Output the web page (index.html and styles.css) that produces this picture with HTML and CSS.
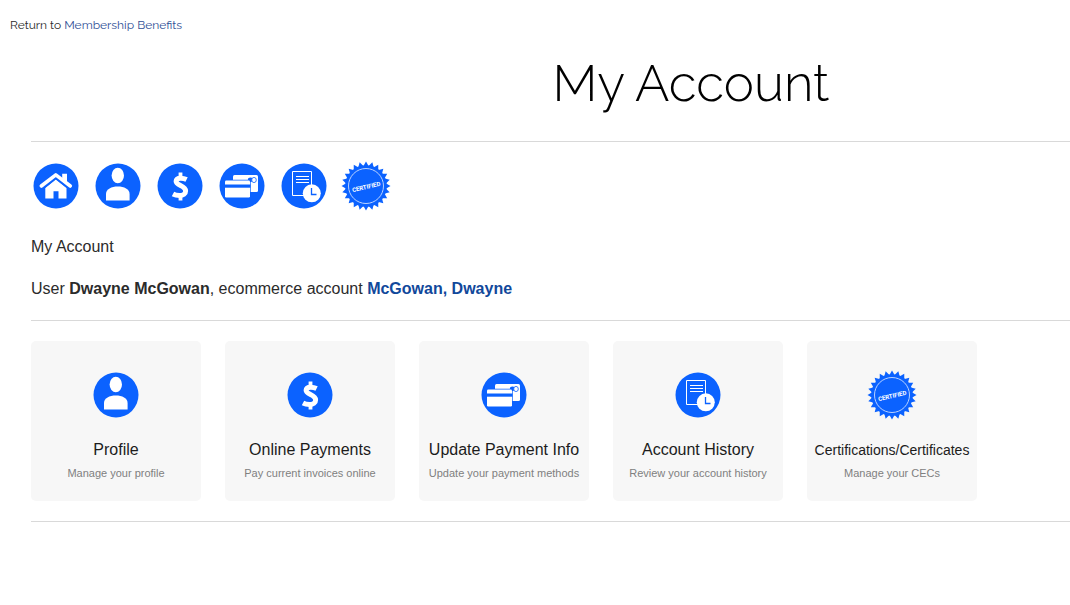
FILE: index.html
```html
<!DOCTYPE html>
<html lang="en">
<head>
<meta charset="utf-8">
<title>My Account</title>
<link rel="stylesheet" href="styles.css">
</head>
<body>
<svg class="sprite" aria-hidden="true">
  <symbol id="home" viewBox="0 0 50 50">
    <circle cx="25" cy="25" r="22.500" fill="#0b62ff"/>
    <path d="M10.300 25 24.800 13.800 39.300 25" fill="none" stroke="#fff" stroke-width="3.600" stroke-linecap="round" stroke-linejoin="round"/>
    <path d="M31.200 12.700h4.800v10l-4.800-3.500zM14.300 27l10.500-8.400 10.700 8.400v10.500h-8v-7.200h-5v7.200h-8.200z" fill="#fff"/>
    <path d="M13 27.300 24.800 18l11.900 9.300" fill="none" stroke="#0b62ff" stroke-width=".7"/>
  </symbol>
  <symbol id="user" viewBox="0 0 50 50">
    <circle cx="25" cy="25" r="22.500" fill="#0b62ff"/>
    <ellipse cx="24.800" cy="14.500" rx="6.200" ry="7.700" fill="#fff"/>
    <path d="M13 39.500v-6.500c0-5 5.500-7.500 11.800-7.500s11.800 2.500 11.800 7.500v6.500z" fill="#fff"/>
  </symbol>
  <symbol id="dollar" viewBox="0 0 50 50">
    <circle cx="25" cy="25" r="22.500" fill="#0b62ff"/>
    <path d="M31.600 18.600c-1.800-.9-3.800-1.400-5.800-1.400-3 0-4.700 1.200-4.700 3.100 0 4.600 9.500 3.900 9.500 9.600 0 3-2.400 4.600-6 4.600-2.400 0-4.600-.4-6.600-1.500" fill="none" stroke="#fff" stroke-width="5"/>
    <path d="M23.600 11.500h3.800v5h-3.800zM23.600 34.500h3.800v5h-3.800z" fill="#fff"/>
  </symbol>
  <symbol id="cards" viewBox="0 0 50 50">
    <circle cx="25" cy="25" r="22.500" fill="#0b62ff"/>
    <rect x="16" y="14" width="25" height="17" rx="1.500" fill="#fff"/>
    <ellipse cx="33.500" cy="18.700" rx="2.600" ry="2.300" fill="#0b62ff"/>
    <ellipse cx="37" cy="19" rx="2.300" ry="2.600" fill="#fff" stroke="#0b62ff" stroke-width=".8"/>
    <rect x="7.200" y="18.700" width="26.500" height="18.600" rx="1.800" fill="#0b62ff"/>
    <rect x="8" y="19.500" width="25" height="17" rx="1.200" fill="#fff"/>
    <path d="M7.500 23.500h26v3.200h-26z" fill="#0b62ff"/>
  </symbol>
  <symbol id="history" viewBox="0 0 50 50">
    <circle cx="25" cy="25" r="22.500" fill="#0b62ff"/>
    <path d="M13.500 10.500h19v24h-19zM17 15.500h13M17 18.500h13M17 21.500h13" fill="none" stroke="#fff"/>
    <circle cx="32.800" cy="32.300" r="9" fill="#fff"/>
    <path d="M32.500 27v6.500h5" fill="none" stroke="#0b62ff" stroke-width="1.300"/>
  </symbol>
  <symbol id="seal" viewBox="0 0 50 50">
    <g fill="#0b62ff">
      <path d="M25 .5 46.200 37.250H3.800z"/>
      <path d="M25 .5 46.200 37.250H3.800z" transform="rotate(15 25 25)"/>
      <path d="M25 .5 46.200 37.250H3.800z" transform="rotate(30 25 25)"/>
      <path d="M25 .5 46.200 37.250H3.800z" transform="rotate(45 25 25)"/>
      <path d="M25 .5 46.200 37.250H3.800z" transform="rotate(60 25 25)"/>
      <path d="M25 .5 46.200 37.250H3.800z" transform="rotate(75 25 25)"/>
      <path d="M25 .5 46.200 37.250H3.800z" transform="rotate(90 25 25)"/>
      <path d="M25 .5 46.200 37.250H3.800z" transform="rotate(105 25 25)"/>
    </g>
    <circle cx="25" cy="25" r="20.800" fill="#0b62ff"/>
    <circle cx="25" cy="25" r="17.500" fill="none" stroke="#b9d2ff"/>
  </symbol>
</svg>

<nav class="breadcrumb">Return to <a href="#benefits">Membership Benefits</a></nav>

<main class="account">
  <h1 class="page-title">My Account</h1>
  <hr class="rule">
  <nav class="shortcuts" aria-label="Account shortcuts">
    <a href="#home" aria-label="Home"><svg class="icon"><use href="#home"/></svg></a>
    <a href="#profile" aria-label="Profile"><svg class="icon"><use href="#user"/></svg></a>
    <a href="#payments" aria-label="Online Payments"><svg class="icon"><use href="#dollar"/></svg></a>
    <a href="#methods" aria-label="Update Payment Info"><svg class="icon"><use href="#cards"/></svg></a>
    <a href="#account-history" aria-label="Account History"><svg class="icon"><use href="#history"/></svg></a>
    <a href="#certificates" aria-label="Certifications"><svg class="icon" viewBox="0 0 50 50"><use href="#seal"/><text class="seal-text" x="25" y="28" text-anchor="middle" transform="rotate(-13 25 25)">CERTIFIED</text></svg></a>
  </nav>
  <p class="line">My Account</p>
  <p class="line">User <strong>Dwayne McGowan</strong>, ecommerce account <a class="owner" href="#owner">McGowan, Dwayne</a></p>
  <hr class="rule">
  <div class="tiles">
    <a class="tile" href="#profile"><svg class="icon" aria-hidden="true"><use href="#user"/></svg><span class="tile-title">Profile</span><span class="tile-note">Manage your profile</span></a>
    <a class="tile" href="#payments"><svg class="icon" aria-hidden="true"><use href="#dollar"/></svg><span class="tile-title">Online Payments</span><span class="tile-note">Pay current invoices online</span></a>
    <a class="tile" href="#methods"><svg class="icon" aria-hidden="true"><use href="#cards"/></svg><span class="tile-title">Update Payment Info</span><span class="tile-note">Update your payment methods</span></a>
    <a class="tile" href="#account-history"><svg class="icon" aria-hidden="true"><use href="#history"/></svg><span class="tile-title">Account History</span><span class="tile-note">Review your account history</span></a>
    <a class="tile" href="#certificates"><svg class="icon" viewBox="0 0 50 50" aria-hidden="true"><use href="#seal"/><text class="seal-text" x="25" y="28" text-anchor="middle" transform="rotate(-13 25 25)">CERTIFIED</text></svg><span class="tile-title tile-title-small">Certifications/Certificates</span><span class="tile-note">Manage your CECs</span></a>
  </div>
  <hr class="rule">
</main>
</body>
</html>
```
FILE: styles.css
```css
* { box-sizing: border-box; }
body {
  margin: 0;
  background: #fff;
  color: #2b2b2b;
  font-family: "Liberation Sans", Arial, sans-serif;
  font-size: 16px;
}
a { color: inherit; text-decoration: none; }
.sprite { position: absolute; width: 0; height: 0; }
.breadcrumb {
  padding: 16px 10px 0;
  font-family: Raleway, Lato, sans-serif;
  font-size: 12px;
  line-height: 18px;
}
.breadcrumb a { color: #2f4f96; }
.account { padding-left: 31px; }
.page-title {
  margin: 0;
  padding: 19px 0 27px 281px;
  color: #000;
  font-family: Raleway, Lato, sans-serif;
  font-size: 51px;
  font-weight: 300;
  line-height: 61px;
  text-align: center;
}
.rule { margin: 0; border: 0; border-top: 1px solid #d9d9d9; }
.shortcuts { display: flex; gap: 12px; padding: 19px 0 24px; }
.icon { display: block; width: 50px; height: 50px; }
.seal-text {
  fill: #fff;
  font-family: Roboto, "Liberation Sans", sans-serif;
  font-size: 6px;
  font-weight: 700;
}
.line { margin: 0 0 18px; line-height: 24px; }
.line + .line { margin-bottom: 19px; }
.owner { color: #11489b; font-weight: 700; }
.tiles { display: flex; gap: 24px; padding: 20px 0; }
.tile {
  display: flex;
  flex-direction: column;
  align-items: center;
  width: 170px;
  padding: 29px 0 20px;
  border-radius: 5px;
  background: #f7f7f7;
  white-space: nowrap;
}
.tile-title {
  margin-top: 18px;
  color: #1c1c1c;
  font-size: 16px;
  line-height: 24px;
}
.tile-title-small { font-size: 14px; }
.tile-note {
  margin-top: 3px;
  color: #808080;
  font-size: 11px;
  line-height: 16px;
}
```
